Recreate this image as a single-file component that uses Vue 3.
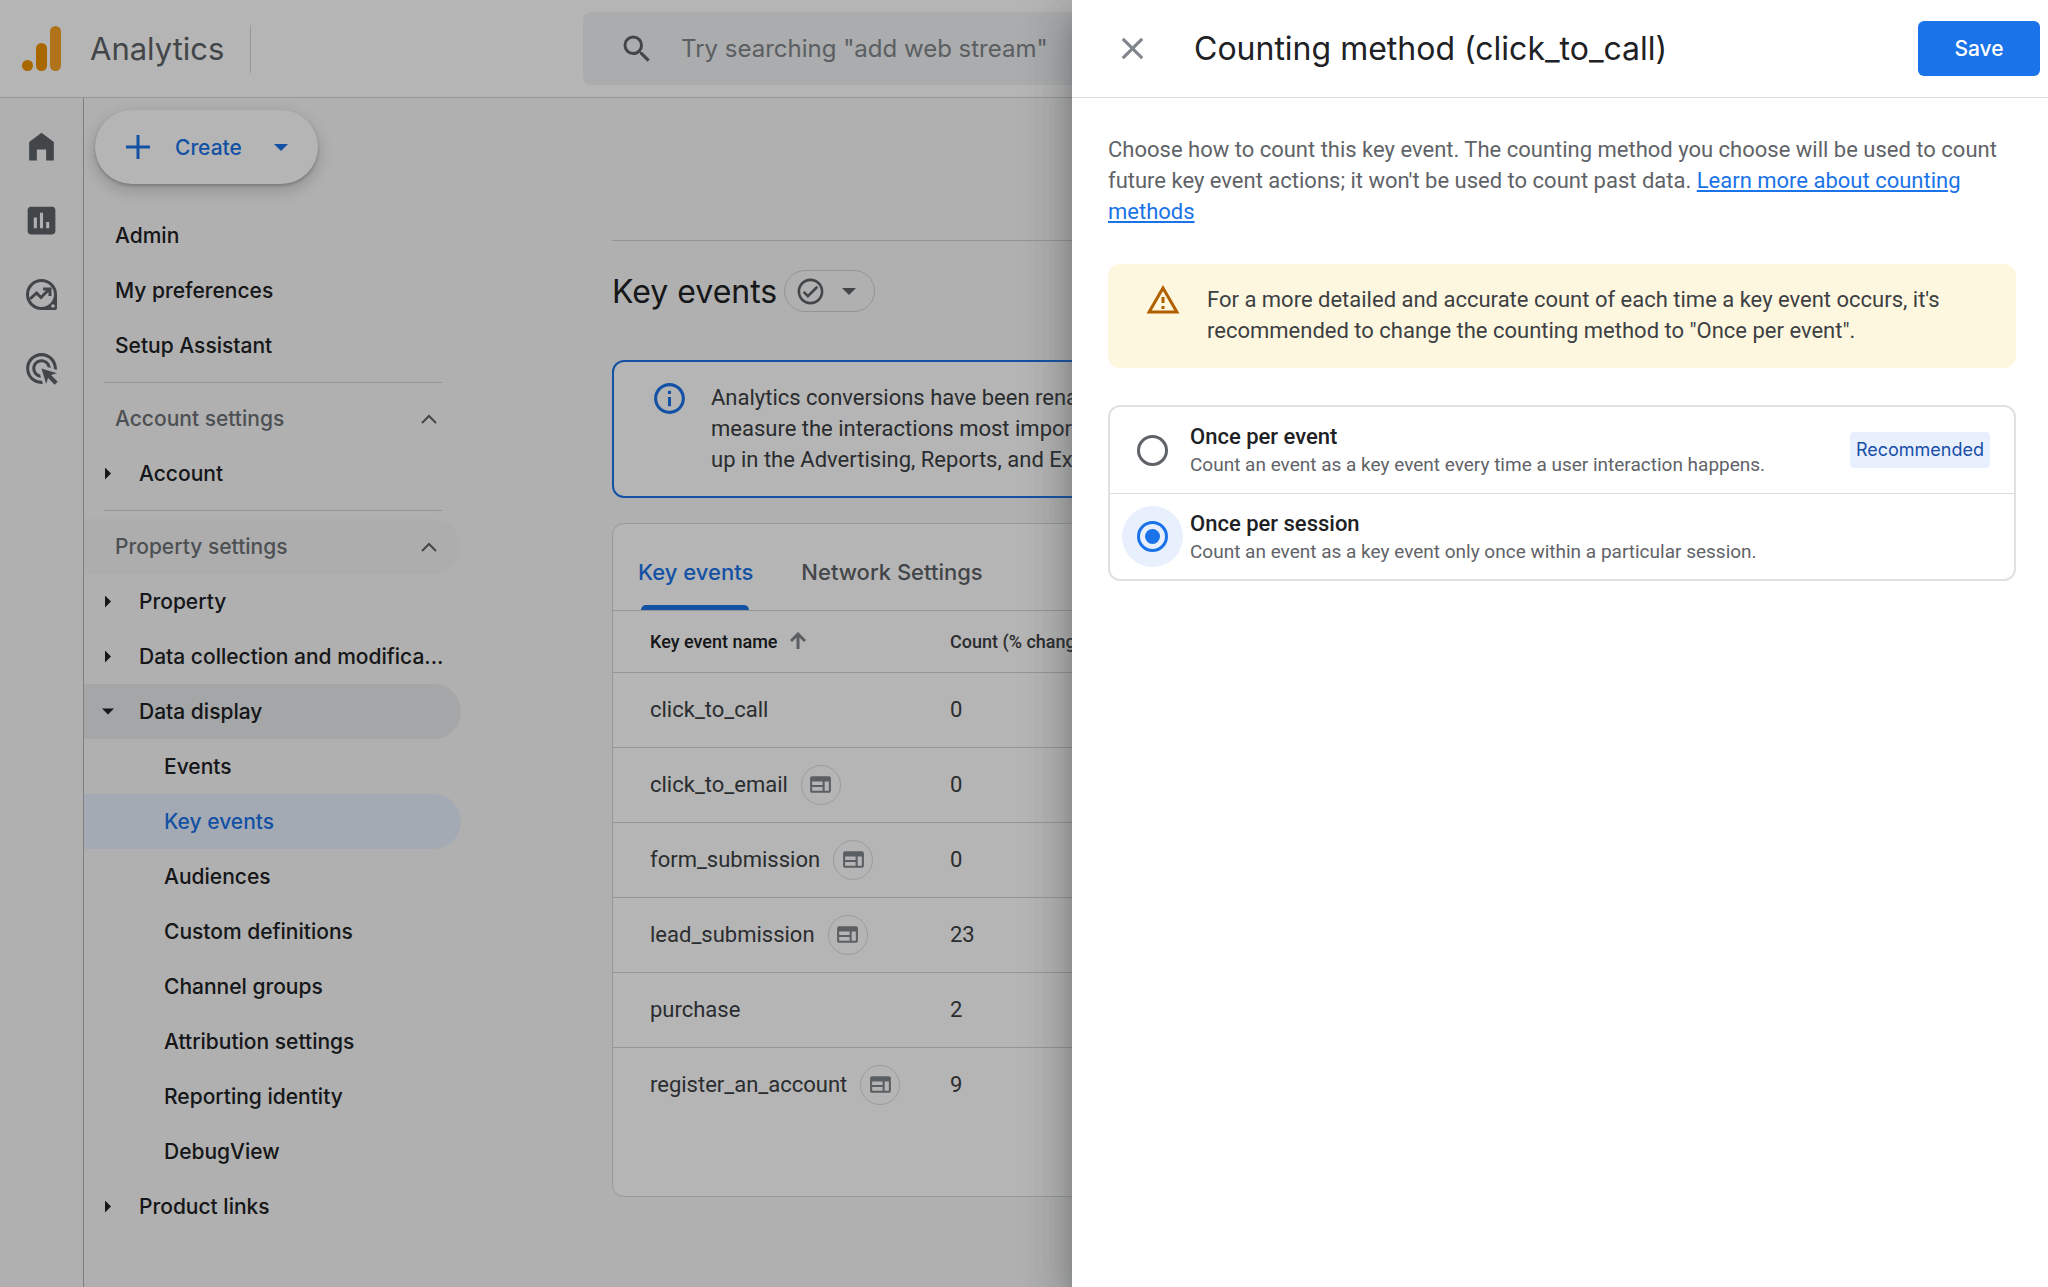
<script setup>
import { ref } from 'vue'

const method = ref('session')
const query = ref('')

const topLinks = ['Admin', 'My preferences', 'Setup Assistant']
const displayLinks = [
  'Events',
  'Key events',
  'Audiences',
  'Custom definitions',
  'Channel groups',
  'Attribution settings',
  'Reporting identity',
  'DebugView'
]
const events = [
  { name: 'click_to_call', count: 0, web: false },
  { name: 'click_to_email', count: 0, web: true },
  { name: 'form_submission', count: 0, web: true },
  { name: 'lead_submission', count: 23, web: true },
  { name: 'purchase', count: 2, web: false },
  { name: 'register_an_account', count: 9, web: true }
]
const methods = [
  {
    id: 'event',
    title: 'Once per event',
    text: 'Count an event as a key event every time a user interaction happens.',
    tag: 'Recommended'
  },
  {
    id: 'session',
    title: 'Once per session',
    text: 'Count an event as a key event only once within a particular session.'
  }
]
</script>

<template>
  <div class="app">
    <header class="topbar">
      <svg class="logo" viewBox="0 0 40 46" aria-hidden="true">
        <circle cx="5.5" cy="39.5" r="5.5" fill="#ee9200" />
        <rect x="14" y="17" width="11" height="28" rx="5.5" fill="#ee9200" />
        <rect x="28" y="0" width="11" height="45" rx="5.5" fill="#f8a325" />
      </svg>
      <span class="brand">Analytics</span>
      <span class="bar-sep"></span>
      <label class="search">
        <svg viewBox="0 0 24 24" aria-hidden="true"><path d="M15.5 14h-.79l-.28-.27A6.47 6.47 0 0 0 16 9.500 6.500 6.500 0 1 0 9.500 16c1.610 0 3.090-.59 4.230-1.570l.27.28v.79l5 4.990L20.490 19l-4.990-5zm-6 0C7.010 14 5 11.990 5 9.500S7.010 5 9.500 5 14 7.010 14 9.500 11.990 14 9.500 14z" /></svg>
        <input v-model="query" type="text" aria-label="Search" placeholder='Try searching "add web stream"' />
      </label>
    </header>

    <div class="body">
      <nav class="rail" aria-label="Sections">
        <a href="#home" aria-label="Home"><svg viewBox="0 0 24 24"><path d="M4 21V9l8-6 8 6v12h-5v-7H9v7z" /></svg></a>
        <a href="#reports" aria-label="Reports"><svg viewBox="0 0 24 24"><path d="M19 3H5c-1.100 0-2 .9-2 2v14c0 1.100.9 2 2 2h14c1.100 0 2-.9 2-2V5c0-1.100-.9-2-2-2zM9 17H7v-7h2v7zm4 0h-2V7h2v10zm4 0h-2v-4h2v4z" /></svg></a>
        <a href="#explore" aria-label="Explore">
          <svg viewBox="-3 -3 37 37">
            <path fill-rule="evenodd" d="M15.500 0a15.500 15.500 0 0 0 0 31H29a2 2 0 0 0 2-2V15.500A15.500 15.500 0 0 0 15.500 0zM15.500 3a12.500 12.500 0 1 1 0 25a12.500 12.500 0 1 1 0-25zM27 25.200a1.800 1.800 0 1 1 0 3.600a1.800 1.800 0 1 1 0-3.600z" />
            <path d="M4 20l6.500-6 4.500 4.500 8-8M17 10h7v7" fill="none" stroke="#5f6368" stroke-width="3" />
          </svg>
        </a>
        <a href="#advertising" aria-label="Advertising"><svg viewBox="0 0 24 24"><path d="M11.710 17.990C8.530 17.840 6 15.220 6 12c0-3.310 2.690-6 6-6 3.220 0 5.840 2.530 5.990 5.710l-2.100-.63C15.480 9.310 13.890 8 12 8c-2.210 0-4 1.790-4 4 0 1.890 1.310 3.480 3.080 3.890l.63 2.100zM22 12c0 .3-.01.6-.04.9l-1.970-.59c.01-.1.01-.21.01-.31 0-4.420-3.580-8-8-8s-8 3.580-8 8 3.580 8 8 8c.1 0 .21 0 .31-.01l.59 1.970c-.3.03-.6.04-.9.04C6.480 22 2 17.520 2 12S6.480 2 12 2s10 4.480 10 10zm-3.770 4.260L22 15l-10-3 3 10 1.260-3.770 4.270 4.270 1.980-1.980-4.280-4.260z" /></svg></a>
      </nav>

      <nav class="side" aria-label="Admin">
        <button class="create" type="button">
          <svg class="plus" viewBox="0 0 24 24"><path d="M12 0v24M0 12h24" stroke="#1a73e8" stroke-width="3" /></svg>
          <span>Create</span>
          <svg class="caret" viewBox="0 0 14 7"><path d="M0 0h14L7 7z" /></svg>
        </button>
        <a v-for="link in topLinks" :key="link" class="item" href="#">{{ link }}</a>
        <hr />
        <button class="item group" type="button">
          Account settings
          <svg viewBox="0 0 16 10"><path d="M1 9l7-7 7 7" /></svg>
        </button>
        <a class="item branch" href="#"><i class="tri"></i><span>Account</span></a>
        <hr />
        <button class="item group hovered" type="button">
          Property settings
          <svg viewBox="0 0 16 10"><path d="M1 9l7-7 7 7" /></svg>
        </button>
        <a class="item branch" href="#"><i class="tri"></i><span>Property</span></a>
        <a class="item branch" href="#"><i class="tri"></i><span>Data collection and modifica...</span></a>
        <a class="item branch open" href="#"><i class="tri down"></i><span>Data display</span></a>
        <a
          v-for="link in displayLinks"
          :key="link"
          class="item leaf"
          :class="{ active: link === 'Key events' }"
          href="#"
        >{{ link }}</a>
        <a class="item branch" href="#"><i class="tri"></i><span>Product links</span></a>
      </nav>

      <main class="main">
        <div class="title-row">
          <h1>Key events</h1>
          <button class="status" type="button" aria-label="Status">
            <svg class="check" viewBox="0 0 24 24"><path d="M16.590 7.580L10 14.170l-2.590-2.580L6 13l4 4 8-8zM12 2C6.480 2 2 6.480 2 12s4.480 10 10 10 10-4.480 10-10S17.520 2 12 2zm0 18c-4.420 0-8-3.580-8-8s3.580-8 8-8 8 3.580 8 8-3.580 8-8 8z" /></svg>
            <svg class="caret" viewBox="0 0 14 7"><path d="M0 0h14L7 7z" /></svg>
          </button>
        </div>

        <section class="info">
          <svg viewBox="0 0 24 24"><path d="M11 7h2v2h-2zm0 4h2v6h-2zm1-9C6.480 2 2 6.480 2 12s4.480 10 10 10 10-4.480 10-10S17.520 2 12 2zm0 18c-4.420 0-8-3.580-8-8s3.580-8 8-8 8 3.580 8 8-3.580 8-8 8z" /></svg>
          <p>
            Analytics conversions have been renamed<br />
            measure the interactions most important<br />
            up in the Advertising, Reports, and Explore
          </p>
        </section>

        <section class="card">
          <div class="tabs" role="tablist">
            <button class="tab selected" role="tab" type="button">Key events</button>
            <button class="tab" role="tab" type="button">Network Settings</button>
          </div>
          <table>
            <thead>
              <tr>
                <th class="name" scope="col">
                  <span class="cell">Key event name
                    <svg viewBox="0 0 16 18"><path d="M8 17V2M1 9l7-7 7 7" /></svg>
                  </span>
                </th>
                <th class="count" scope="col">Count (% change)</th>
              </tr>
            </thead>
            <tbody>
              <tr v-for="event in events" :key="event.name">
                <td class="name">
                  <span class="cell">{{ event.name }}
                    <span v-if="event.web" class="web">
                      <svg viewBox="0 0 24 24"><path d="M20 4H4c-1.100 0-2 .9-2 2v12c0 1.100.9 2 2 2h16c1.100 0 2-.9 2-2V6c0-1.100-.9-2-2-2zm-6 14H4v-3.500h10V18zm0-5.500H4V9h10v3.500zm6 5.500h-4V9h4v9z" /></svg>
                    </span>
                  </span>
                </td>
                <td>{{ event.count }}</td>
              </tr>
            </tbody>
          </table>
        </section>
      </main>
    </div>

    <div class="scrim"></div>

    <aside class="sheet" role="dialog" aria-labelledby="sheet-title">
      <header class="sheet-head">
        <button class="close" type="button" aria-label="Close">
          <svg viewBox="0 0 24 24"><path d="M19 6.410L17.590 5 12 10.590 6.410 5 5 6.410 10.590 12 5 17.590 6.410 19 12 13.410 17.590 19 19 17.590 13.410 12z" /></svg>
        </button>
        <h2 id="sheet-title">Counting method (click_to_call)</h2>
        <button class="save" type="button">Save</button>
      </header>
      <div class="sheet-body">
        <p class="intro">
          Choose how to count this key event. The counting method you choose will be used to count
          future key event actions; it won't be used to count past data.
          <a href="#learn">Learn more about counting methods</a>
        </p>
        <div class="warning">
          <svg viewBox="0 0 24 24"><path d="M12 5.990L19.530 19H4.470L12 5.990M12 2L1 21h22L12 2zm1 14h-2v2h2v-2zm0-6h-2v4h2v-4z" /></svg>
          <p>
            For a more detailed and accurate count of each time a key event occurs, it's
            recommended to change the counting method to "Once per event".
          </p>
        </div>
        <div class="options" role="radiogroup" aria-labelledby="sheet-title">
          <label v-for="m in methods" :key="m.id" class="option">
            <span class="halo"><input v-model="method" type="radio" name="method" :value="m.id" /></span>
            <span class="option-text">
              <strong>{{ m.title }}</strong>
              <small>{{ m.text }}</small>
            </span>
            <span v-if="m.tag" class="tag">{{ m.tag }}</span>
          </label>
        </div>
      </div>
    </aside>
  </div>
</template>

<style>
body {
  margin: 0;
  background: #f8f8f8;
}
</style>

<style scoped>
.app {
  position: relative;
  display: flex;
  flex-direction: column;
  min-height: 100vh;
  overflow: hidden;
  background: #f8f8f8;
  color: #202124;
  font-family: Roboto, "Liberation Sans", sans-serif;
  font-size: 22px;
}
.app *,
.app *::before {
  box-sizing: border-box;
}
svg {
  display: block;
  flex: none;
}
button {
  margin: 0;
  padding: 0;
  border: 0;
  background: none;
  color: inherit;
  font: inherit;
  cursor: pointer;
}
p,
h1,
h2 {
  margin: 0;
}

.topbar {
  display: flex;
  align-items: center;
  height: 98px;
  padding-left: 22px;
  border-bottom: 1px solid #d4d6d9;
  background: #fff;
}
.logo {
  width: 40px;
  height: 46px;
}
.brand {
  width: 160px;
  margin-left: 28px;
  color: #5f6368;
  font-family: Inter, sans-serif;
  font-size: 31px;
}
.bar-sep {
  width: 1px;
  height: 48px;
  background: #d4d6d9;
}
.search {
  display: flex;
  flex: 1;
  align-items: center;
  height: 73px;
  margin-left: 332px;
  padding-left: 36px;
  border-radius: 8px;
  background: #f1f3f4;
}
.search svg {
  width: 36px;
  height: 36px;
  fill: #5f6368;
}
.search input {
  flex: 1;
  margin-left: 26px;
  padding: 0;
  border: 0;
  outline: 0;
  background: none;
  font: 24px Inter, sans-serif;
}
.search input::placeholder {
  color: #80868b;
  opacity: 1;
}

.body {
  display: flex;
  flex: 1;
}
.rail {
  display: flex;
  flex-direction: column;
  align-items: center;
  gap: 37px;
  width: 84px;
  padding-top: 30px;
  border-right: 1px solid #b0b3b6;
}
.rail svg {
  width: 37px;
  height: 37px;
  fill: #5f6368;
}

.side {
  width: 377px;
  padding-top: 12px;
  font-family: Inter, sans-serif;
  font-size: 21px;
  font-weight: 500;
}
.create {
  display: flex;
  align-items: center;
  width: 223px;
  height: 74px;
  margin: 0 0 24px 11px;
  padding: 0 30px 0 31px;
  border-radius: 37px;
  background: #fff;
  box-shadow: 0 2px 3px rgba(60, 64, 67, 0.3), 0 6px 12px 4px rgba(60, 64, 67, 0.15);
  color: #1a73e8;
}
.plus {
  width: 24px;
  height: 24px;
  margin-right: 25px;
}
.caret {
  width: 14px;
  height: 7px;
  margin-left: auto;
  fill: currentColor;
}
.item {
  display: flex;
  align-items: center;
  width: 100%;
  height: 55px;
  padding-left: 31px;
  border-radius: 0 28px 28px 0;
  color: #202124;
  text-align: left;
  text-decoration: none;
  white-space: nowrap;
}
.group {
  justify-content: space-between;
  padding-right: 24px;
  color: #6d7175;
}
.group svg {
  width: 16px;
  height: 10px;
  fill: none;
  stroke: #5f6368;
  stroke-width: 2;
}
.hovered {
  background: #f4f4f4;
}
.branch {
  padding-left: 18px;
}
.leaf {
  padding-left: 80px;
}
.open {
  background: #e8eaeb;
}
.active {
  background: #e8f0fe;
  color: #1a73e8;
}
.tri {
  width: 12px;
  height: 12px;
  margin-right: 25px;
  background: currentColor;
  clip-path: polygon(3px 0, 9px 6px, 3px 12px);
}
.down {
  clip-path: polygon(0 3px, 12px 3px, 6px 9px);
}
.side hr {
  height: 1px;
  margin: 9px 19px 8px 20px;
  border: 0;
  background: #d0d2d5;
}

.main {
  flex: 1;
  padding: 142px 151px 91px;
}
.title-row {
  display: flex;
  align-items: center;
  gap: 7px;
  height: 101px;
  border-top: 1px solid #d0d2d5;
}
h1 {
  font-family: Inter, sans-serif;
  font-size: 32px;
  font-weight: 400;
}
.status {
  display: flex;
  align-items: center;
  width: 91px;
  height: 42px;
  padding: 0 18px 0 10px;
  border: 1px solid #d0d2d5;
  border-radius: 21px;
  color: #5f6368;
}
.check {
  width: 31px;
  height: 31px;
  fill: currentColor;
}
.info {
  display: flex;
  margin-top: 19px;
  padding: 18px 37px 21px;
  border: 2px solid #1a73e8;
  border-radius: 12px;
  background: #fff;
  color: #3c4043;
}
.info svg {
  width: 37px;
  height: 37px;
  margin-right: 23px;
  fill: #1a73e8;
}
.info p {
  padding-top: 2px;
  line-height: 31px;
  white-space: nowrap;
}
.card {
  margin-top: 25px;
  padding-bottom: 74px;
  border: 1px solid #d4d6d9;
  border-radius: 12px;
  background: #fff;
}
.tabs {
  display: flex;
  gap: 48px;
  height: 87px;
  padding-left: 25px;
  border-bottom: 1px solid #d0d2d5;
}
.tab {
  position: relative;
  padding-top: 10px;
  color: #5f6368;
  font: 500 22px Inter, sans-serif;
}
.selected {
  color: #1a73e8;
}
.selected::before {
  position: absolute;
  right: 4px;
  bottom: 0;
  left: 3px;
  height: 5px;
  border-radius: 5px 5px 0 0;
  background: #1a73e8;
  content: "";
}
table {
  width: 100%;
  border-collapse: collapse;
}
th,
td {
  height: 75px;
  padding: 0;
  text-align: left;
}
th {
  height: 61px;
  font-size: 18px;
  font-weight: 500;
}
tr {
  border-bottom: 1px solid #d0d2d5;
}
tbody tr:last-child {
  border-bottom: 0;
}
td {
  color: #3c4043;
}
.name {
  width: 337px;
  padding-left: 37px;
}
.count {
  color: #3c4043;
}
.cell {
  display: flex;
  align-items: center;
  gap: 13px;
}
.cell > svg {
  width: 16px;
  height: 18px;
  fill: none;
  stroke: #80868b;
  stroke-width: 3;
}
.web {
  display: grid;
  place-items: center;
  width: 40px;
  height: 40px;
  border: 1px solid #dadce0;
  border-radius: 50%;
}
.web svg {
  width: 25px;
  height: 25px;
  fill: #80868b;
}

.scrim {
  position: absolute;
  inset: 0;
  background: rgba(0, 0, 0, 0.29);
}
.sheet {
  position: absolute;
  top: 0;
  right: 0;
  bottom: 0;
  width: 976px;
  max-width: 100%;
  background: #fff;
  box-shadow: 0 12px 15px -8px rgba(60, 64, 67, 0.4), 0 24px 36px 3px rgba(60, 64, 67, 0.28),
    0 9px 45px 8px rgba(60, 64, 67, 0.2);
}
.sheet-head {
  display: flex;
  align-items: center;
  height: 98px;
  padding: 0 8px 0 42px;
  border-bottom: 1px solid #dadce0;
}
.close svg {
  width: 37px;
  height: 37px;
  fill: #80868b;
}
h2 {
  flex: 1;
  margin-left: 43px;
  font-family: Inter, sans-serif;
  font-size: 32px;
  font-weight: 400;
}
.save {
  width: 122px;
  height: 55px;
  border-radius: 6px;
  background: #1a73e8;
  color: #fff;
  font: 500 21px Inter, sans-serif;
}
.sheet-body {
  padding: 36px 32px 36px 36px;
}
.intro {
  color: #5f6368;
  line-height: 31px;
}
.intro a {
  color: #1a73e8;
}
.warning {
  display: flex;
  margin-top: 37px;
  padding: 18px 36px 22px 37px;
  border-radius: 12px;
  background: #fef7e0;
  color: #3c4043;
}
.warning svg {
  width: 36px;
  height: 36px;
  margin-right: 26px;
  fill: #b06000;
}
.warning p {
  padding-top: 2px;
  line-height: 31px;
}
.options {
  margin-top: 37px;
  border: 2px solid #dfe1e3;
  border-radius: 12px;
}
.option {
  display: flex;
  align-items: center;
  height: 86px;
  padding: 0 24px 0 12px;
}
.option + .option {
  border-top: 1px solid #dadce0;
}
.halo {
  display: grid;
  place-items: center;
  width: 61px;
  height: 61px;
  margin-right: 7px;
  border-radius: 50%;
}
.halo:has(:checked) {
  background: #e8f0fe;
}
.halo input {
  display: grid;
  place-items: center;
  width: 31px;
  height: 31px;
  margin: 0;
  border: 3px solid #5f6368;
  border-radius: 50%;
  appearance: none;
}
.halo input:checked {
  border-color: #1a73e8;
}
.halo input:checked::before {
  width: 15px;
  height: 15px;
  border-radius: 50%;
  background: #1a73e8;
  content: "";
}
.option-text {
  display: flex;
  flex: 1;
  flex-direction: column;
}
strong {
  font-weight: 500;
  line-height: 30px;
}
small {
  color: #5f6368;
  font-size: 19px;
  line-height: 26px;
}
.tag {
  padding: 0 6px;
  border-radius: 4px;
  background: #e8f0fe;
  color: #174ea6;
  font: 18px/36px Inter, sans-serif;
}
</style>
